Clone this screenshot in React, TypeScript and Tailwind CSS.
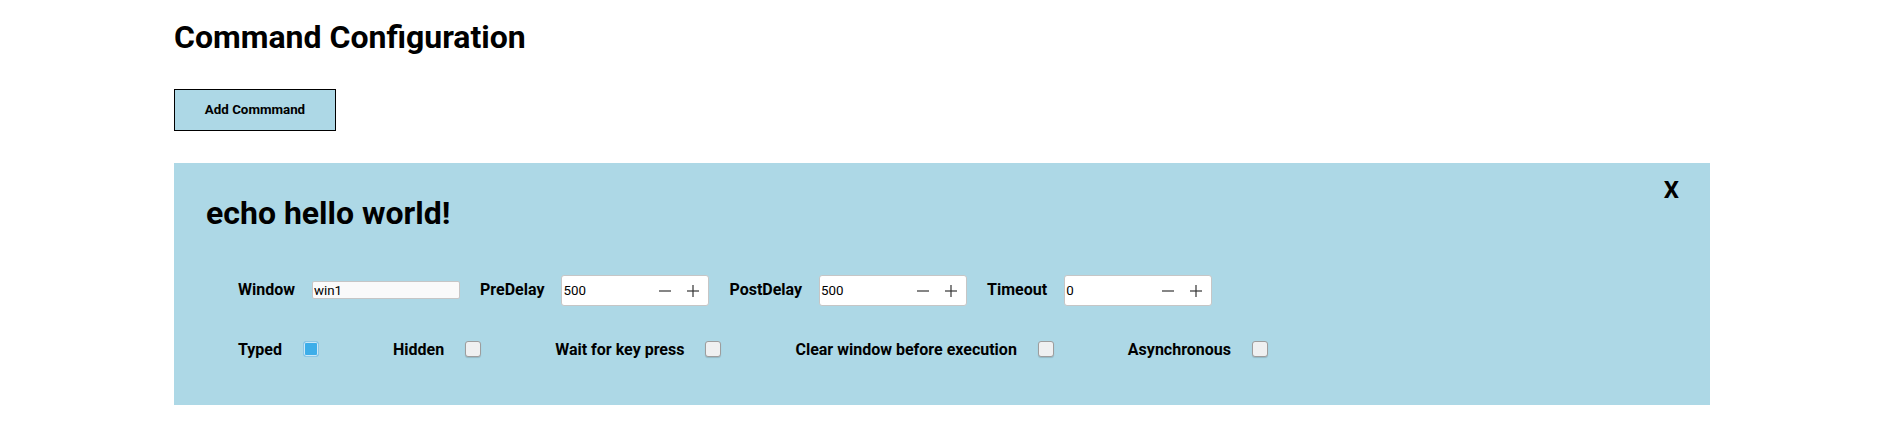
import { useState } from "react";

type Flag = {
    name: string
    checked: boolean
}

function NumberField({ value }: { value: number }) {
    return (
        <div className="flex items-center w-[148px] h-[31px] border border-[#c6c6c6] rounded-[3px] bg-white">
            <input
                type="text"
                defaultValue={value}
                className="flex-1 min-w-0 pl-[1px] text-[13.33px] text-black bg-transparent focus:outline-none"
            />
            <svg width="12" height="12" viewBox="0 0 12 12" className="mr-[16px]">
                <line x1="0" y1="6" x2="12" y2="6" stroke="#333" strokeWidth="1.2" />
            </svg>
            <svg width="12" height="12" viewBox="0 0 12 12" className="mr-[9px]">
                <line x1="0" y1="6" x2="12" y2="6" stroke="#333" strokeWidth="1.2" />
                <line x1="6" y1="0" x2="6" y2="12" stroke="#333" strokeWidth="1.2" />
            </svg>
        </div>
    )
}

function CommandCard() {
    const [flags, setFlags] = useState<Flag[]>([
        { name: 'Typed', checked: true },
        { name: 'Hidden', checked: false },
        { name: 'Wait for key press', checked: false },
        { name: 'Clear window before execution', checked: false },
        { name: 'Asynchronous', checked: false },
    ])

    const toggle = (i: number) => {
        setFlags(flags.map((f, idx) => idx === i ? { ...f, checked: !f.checked } : f))
    }

    return (
        <div className="relative mt-[32px] bg-[#add8e6] pt-[32px] pl-[32px] pb-[46px]">
            <button className="absolute top-[13px] right-[31px] text-[24px] leading-[28px] font-bold text-black">X</button>

            <h2 className="text-[32px] leading-[37px] font-bold text-black">echo hello world!</h2>

            <div className="flex items-baseline gap-[20px] mt-[43px] ml-[32px]">
                <div className="flex items-baseline gap-[17px]">
                    <label className="text-[16px] leading-[19px] font-bold text-black">Window</label>
                    <input
                        type="text"
                        defaultValue="win1"
                        className="w-[148px] h-[18px] border border-[#c6c6c6] rounded-[2px] bg-[#fafafa] px-[1px] text-[13.33px] text-black focus:outline-none"
                    />
                </div>
                <div className="flex items-baseline gap-[17px]">
                    <label className="text-[16px] leading-[19px] font-bold text-black">PreDelay</label>
                    <NumberField value={500} />
                </div>
                <div className="flex items-baseline gap-[17px]">
                    <label className="text-[16px] leading-[19px] font-bold text-black">PostDelay</label>
                    <NumberField value={500} />
                </div>
                <div className="flex items-baseline gap-[17px]">
                    <label className="text-[16px] leading-[19px] font-bold text-black">Timeout</label>
                    <NumberField value={0} />
                </div>
            </div>

            <div className="flex items-start gap-[74px] mt-[34px] ml-[32px]">
                {flags.map((f, i) => (
                    <label key={f.name} className="flex items-start gap-[21px] cursor-pointer">
                        <span className="text-[16px] leading-[19px] font-bold text-black">{f.name}</span>
                        <input
                            type="checkbox"
                            checked={f.checked}
                            onChange={() => toggle(i)}
                            className="appearance-none mt-[1px] w-[16px] h-[16px] rounded-[3px] border border-[#9d9d9d] bg-[#eff0f1] shadow-[0_1px_1px_rgba(0,0,0,0.15)] checked:bg-[#3daee9] checked:border-[#8cc6e4] checked:shadow-[inset_0_0_0_1px_#cbe8f7]"
                        />
                    </label>
                ))}
            </div>
        </div>
    )
}

export default function App() {
    return (
        <div className="min-h-[424px] bg-white font-[Roboto,sans-serif]">
            <div className="ml-[174px] w-[1536px] pt-[19px]">
                <h1 className="text-[32px] leading-[37px] font-bold text-black">Command Configuration</h1>

                <button className="mt-[33px] w-[162px] h-[42px] flex items-center justify-center border border-black bg-[#add8e6] text-[13.33px] font-bold text-black">
                    Add Commmand
                </button>

                <CommandCard />
            </div>
        </div>
    )
}
